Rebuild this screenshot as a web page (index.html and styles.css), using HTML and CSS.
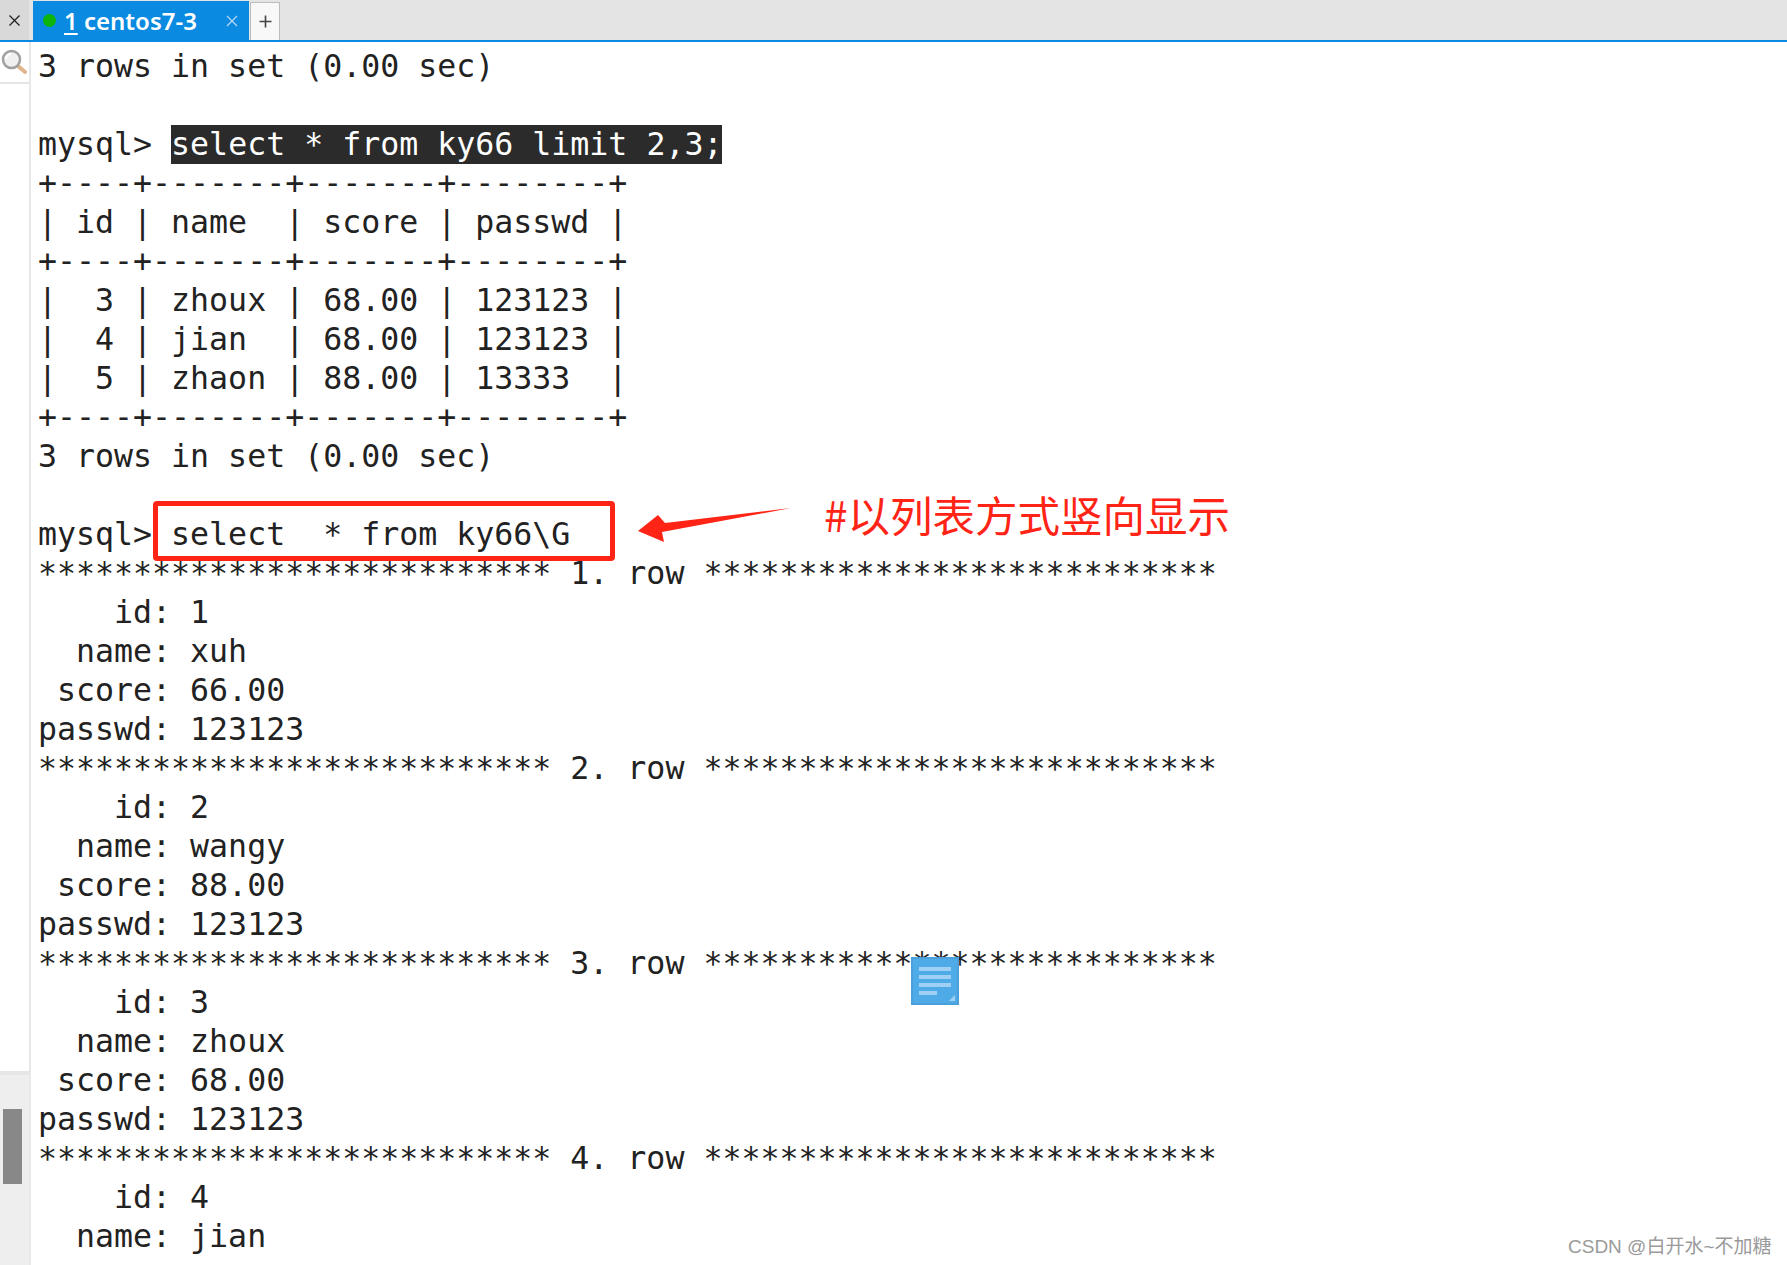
FILE: index.html
```html
<!DOCTYPE html>
<html lang="zh">
<head>
<meta charset="utf-8">
<title>centos7-3</title>
<link rel="stylesheet" href="styles.css">
</head>
<body>
<div class="app">
  <header class="tabbar">
    <div class="close-all"><svg width="13" height="13" viewBox="0 0 13 13"><path d="M1.5 1.5l10 10M11.5 1.5l-10 10" stroke="#222" stroke-width="1.3" fill="none"/></svg></div>
    <div class="tab">
      <span class="dot"></span>
      <span class="tab-title"><u>1</u> centos7-3</span>
      <svg class="tab-x" width="12" height="12" viewBox="0 0 12 12"><path d="M1 1l10 10M11 1L1 11" stroke="#b9d9f2" stroke-width="1.2" fill="none"/></svg>
    </div>
    <div class="tab-add"><svg width="13" height="13" viewBox="0 0 13 13"><path d="M6.500 0.500v12M0.500 6.500h12" stroke="#444" stroke-width="1.600" fill="none"/></svg></div>
  </header>
  <div class="main">
    <aside class="side">
      <div class="search">
        <svg width="26" height="26" viewBox="0 0 26 26"><path d="M17 17l7 6" stroke="#e0b58e" stroke-width="4" stroke-linecap="round"/><circle cx="10.500" cy="10.500" r="8.500" fill="#f0f0f0" stroke="#a0a0a0" stroke-width="2.500"/><path d="M5 10a5.500 5.500 0 0 1 5-5" stroke="#fff" stroke-width="2" fill="none"/></svg>
      </div>
      <div class="side-fill"></div>
      <div class="scroll-track"><div class="scroll-thumb"></div></div>
    </aside>
    <pre class="term">3 rows in set (0.00 sec)

mysql&gt; <span class="sel">select * from ky66 limit 2,3;</span>
+----+-------+-------+--------+
| id | name  | score | passwd |
+----+-------+-------+--------+
|  3 | zhoux | 68.00 | 123123 |
|  4 | jian  | 68.00 | 123123 |
|  5 | zhaon | 88.00 | 13333  |
+----+-------+-------+--------+
3 rows in set (0.00 sec)

mysql&gt; select  * from ky66\G
*************************** 1. row ***************************
    id: 1
  name: xuh
 score: 66.00
passwd: 123123
*************************** 2. row ***************************
    id: 2
  name: wangy
 score: 88.00
passwd: 123123
*************************** 3. row ***************************
    id: 3
  name: zhoux
 score: 68.00
passwd: 123123
*************************** 4. row ***************************
    id: 4
  name: jian</pre>
  </div>
  <div class="redbox"></div>
  <svg class="arrow" width="160" height="40" viewBox="0 0 160 40"><polygon points="0,26 20,10 27,18 153,3 24,27 26,37" fill="#ff2416"/></svg>
  <div class="note-text">#以列表方式竖向显示</div>
  <div class="float-note">
    <span class="nl"></span><span class="nl"></span><span class="nl"></span><span class="nl short"></span>
    <svg class="nc" width="6" height="6" viewBox="0 0 6 6"><polygon points="6,0 6,6 0,6" fill="#9fd0f3"/></svg>
  </div>
  <div class="watermark">CSDN @白开水~不加糖</div>
</div>
</body>
</html>
```
FILE: styles.css
```css
html, body { margin: 0; padding: 0; background: #fff; }
.app { position: relative; width: 1787px; height: 1265px; overflow: hidden; display: flex; flex-direction: column; }
.tabbar { height: 40px; flex: none; display: flex; align-items: stretch; background: #e4e4e4; border-bottom: 2px solid #0a8ae0; }
.close-all { width: 29px; background: #d9d9d9; display: flex; align-items: center; justify-content: center; margin-right: 4px; }
.tab { width: 216px; margin-top: 1px; background: #0a8ae0; display: flex; align-items: center; position: relative; color: #fff; }
.dot { width: 13px; height: 13px; border-radius: 50%; background: #0cb40c; margin-left: 10px; margin-right: 8px; flex: none; }
.tab-title { font-family: "Noto Sans", sans-serif; font-weight: 600; font-size: 24px; line-height: 40px; white-space: pre; }
.tab-title u { text-underline-offset: 3px; }
.tab-x { position: absolute; left: 193px; top: 14px; }
.tab-add { width: 28px; margin: 2px 0 0 1px; background: #f8f8f8; border: 1px solid #bdbdbd; border-bottom: none; box-sizing: content-box; display: flex; align-items: center; justify-content: center; }
.main { flex: 1; display: flex; min-height: 0; }
.side { width: 29px; flex: none; display: flex; flex-direction: column; border-right: 2px solid #e8e8e8; margin-right: 2px; }
.search { flex: none; border-bottom: 2px solid #e6e6e6; padding: 7px 0 0 1px; box-sizing: border-box; height: 42px; }
.side-fill { height: 987px; flex: none; border-bottom: 4px solid #e6e6e6; }
.scroll-track { flex: 1; background: #eeeeee; padding: 34px 7px 0 3px; }
.scroll-thumb { height: 75px; background: #888; }
.term { margin: 0; padding: 5px 0 0 5px; flex: 1; font-family: "DejaVu Sans Mono", monospace; font-size: 31.58px; line-height: 39px; color: #222; white-space: pre; overflow: hidden; }
.sel { display: inline-block; background: #2b2b2b; color: #fff; }
.redbox { position: absolute; left: 153px; top: 501px; width: 462px; height: 60px; box-sizing: border-box; border: 5px solid #ff2416; border-radius: 4px; }
.arrow { position: absolute; left: 638px; top: 505px; }
.note-text { position: absolute; left: 824px; top: 484px; font-family: "Noto Sans CJK SC", sans-serif; font-size: 42.5px; line-height: 60px; color: #ff2416; white-space: nowrap; }
.float-note { position: absolute; left: 911px; top: 957px; width: 48px; height: 48px; box-sizing: border-box; background: #4fabe8; border: 2px solid #4ba0dc; padding: 8px 6px; display: flex; flex-direction: column; gap: 4px; }
.nl { display: block; width: 32px; height: 4px; background: #9fd0f3; }
.nl.short { width: 18px; }
.nc { position: absolute; right: 2px; bottom: 2px; }
.watermark { position: absolute; left: 1568px; top: 1234px; font-family: "Liberation Sans", "Noto Sans CJK SC", sans-serif; font-size: 19px; line-height: 26px; color: #9a9a9a; white-space: nowrap; }
```
